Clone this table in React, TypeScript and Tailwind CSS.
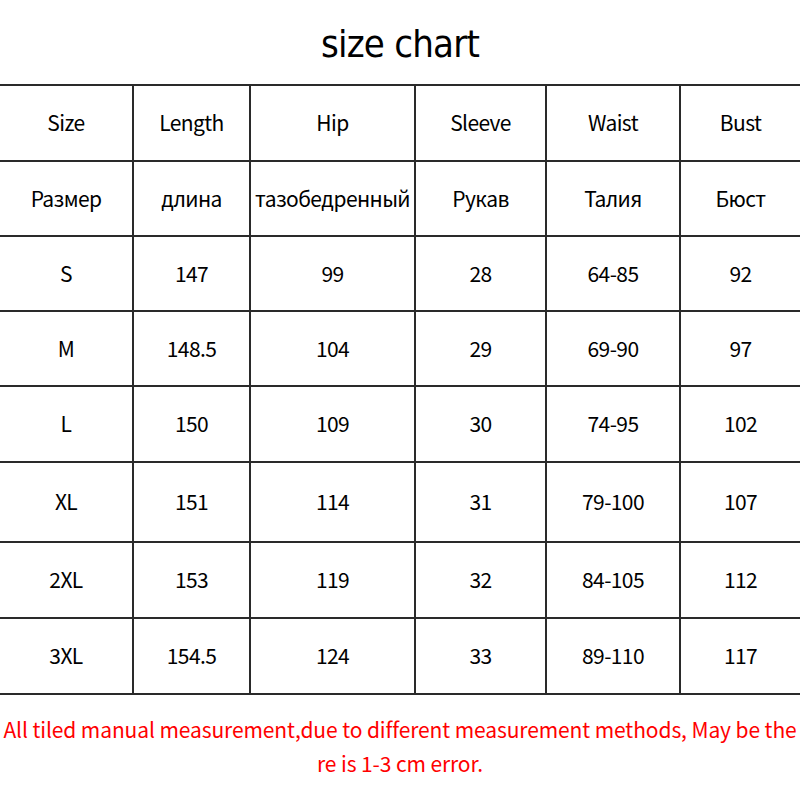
const cols = ['w-[132px]', 'w-[117px]', 'w-[165px]', 'w-[131px]', 'w-[134px]', 'w-[121px]'];

const rows: { h: string; cells: string[] }[] = [
  { h: 'h-[76px]', cells: ['Size', 'Length', 'Hip', 'Sleeve', 'Waist', 'Bust'] },
  { h: 'h-[75px]', cells: ['Размер', 'длина', 'тазобедренный', 'Рукав', 'Талия', 'Бюст'] },
  { h: 'h-[75px]', cells: ['S', '147', '99', '28', '64-85', '92'] },
  { h: 'h-[75px]', cells: ['M', '148.5', '104', '29', '69-90', '97'] },
  { h: 'h-[76px]', cells: ['L', '150', '109', '30', '74-95', '102'] },
  { h: 'h-[80px]', cells: ['XL', '151', '114', '31', '79-100', '107'] },
  { h: 'h-[76px]', cells: ['2XL', '153', '119', '32', '84-105', '112'] },
  { h: 'h-[76px]', cells: ['3XL', '154.5', '124', '33', '89-110', '117'] },
];

export default function App() {
  return (
    <div className="w-[800px] h-[800px] bg-white text-black font-['Noto_Sans_CJK_SC','Noto_Sans',sans-serif]">
      <div className="h-[84px] flex items-center justify-center pt-[4px]">
        <h1 className="text-[38px] leading-none font-['DejaVu_Sans_Condensed','DejaVu_Sans',sans-serif] tracking-[-0.8px]">
          size chart
        </h1>
      </div>

      <div className="border-t-2 border-[#2a2a2a]">
        {rows.map((row, i) => (
          <div key={i} className={`flex border-b-2 border-[#2a2a2a] ${row.h}`}>
            {row.cells.map((c, j) => (
              <div
                key={j}
                className={`${cols[j]} flex items-center justify-center text-[21px] tracking-[-0.6px] whitespace-nowrap ${j > 0 ? 'border-l-2 border-[#2a2a2a]' : ''}`}
              >
                {c}
              </div>
            ))}
          </div>
        ))}
      </div>

      <div className="pt-[17px] text-center text-[#ff0000] text-[21px] leading-[34px] tracking-[-0.1px] whitespace-nowrap">
        All tiled manual measurement,due to different measurement methods, May be the
        <br />
        re is 1-3 cm error.
      </div>
    </div>
  );
}
